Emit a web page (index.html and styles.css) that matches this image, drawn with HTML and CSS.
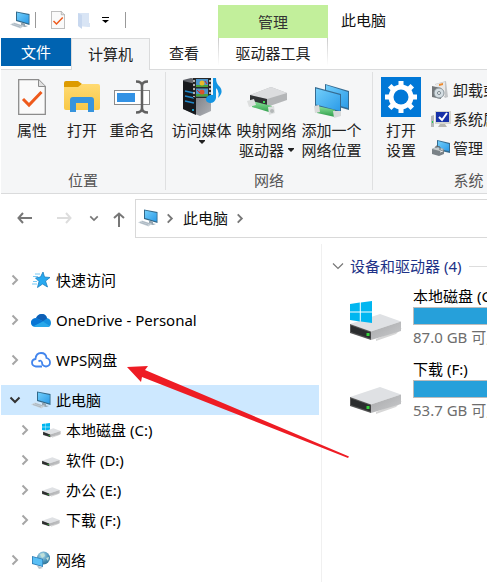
FILE: index.html
```html
<!DOCTYPE html>
<html lang="zh-CN">
<head>
<meta charset="utf-8">
<meta name="viewport" content="width=device-width, initial-scale=1">
<title>此电脑</title>
<link rel="stylesheet" href="styles.css">
</head>
<body>
<svg class="sprite" aria-hidden="true">
  <defs>
    <linearGradient id="screen" x1="0" y1="0" x2="1" y2="1"><stop offset="0" stop-color="#72cefa"/><stop offset="1" stop-color="#2b9be8"/></linearGradient>
    <linearGradient id="folder" x1="0" y1="0" x2="0" y2="1"><stop offset="0" stop-color="#ffda72"/><stop offset="1" stop-color="#f8c847"/></linearGradient>
    <linearGradient id="side" x1="0" y1="0" x2="1" y2="1"><stop offset="0" stop-color="#a8a9ab"/><stop offset="1" stop-color="#c9cacc"/></linearGradient>
    <linearGradient id="tube" x1="0" y1="0" x2="0" y2="1"><stop offset="0" stop-color="#8be29b"/><stop offset="1" stop-color="#2c9c48"/></linearGradient>
    <linearGradient id="tower" x1="0" y1="0" x2="1" y2="1"><stop offset="0" stop-color="#55585f"/><stop offset="1" stop-color="#aeb1b6"/></linearGradient>
    <radialGradient id="globe" cx=".4" cy=".3" r=".8"><stop offset="0" stop-color="#b5e0ee"/><stop offset=".6" stop-color="#4b93b8"/><stop offset="1" stop-color="#286888"/></radialGradient>
  </defs>
  <symbol id="pc" viewBox="0 0 20 18">
    <path d="M6 0.500 19.500 3V14L6 10z" fill="#326889"/>
    <path d="M7 1.500 18.700 4V12.500L7 9z" fill="url(#screen)"/>
    <path d="M11 11.500l4 1v2l3 .6-3 1-5-1.300 1-.5z" fill="#93a4b0"/>
    <path d="M0 13.500 4 11.500 14 14.800 10.500 17.500z" fill="#c9d2d9"/>
    <path d="M2 13.500l8 2.500M4 12.500l8 2.500" stroke="#9dacb7" stroke-width=".7"/>
  </symbol>
  <symbol id="doc" viewBox="0 0 28 36">
    <path d="M.7.7H20.500L27.300 7.500V35.300H.7z" fill="#fafafa" stroke="#8c8c8c" stroke-width="1.300"/>
    <path d="M20.500.7V7.500H27.300" fill="#e2e2e2" stroke="#8c8c8c"/>
    <path d="M5 20l6 6L23.500 13" fill="none" stroke="#ee5a1c" stroke-width="3"/>
  </symbol>
  <symbol id="drive" viewBox="0 0 52 27">
    <path d="M26 25 52 14 46 20 26 27z" fill="#d7d7d7"/>
    <path d="M0 10 30 0 51 7.500 21 17.500z" fill="#dfe1e4"/>
    <path d="M21 17.500 51 7.500V17L21 26z" fill="url(#side)"/>
    <path d="M0 10 21 17.500V26L0 19z" fill="#555"/>
    <path d="M1 11.500 20.500 18.500V24.500L1 18z" fill="#2b2d2e"/>
    <rect x="16.500" y="19" width="3" height="3" fill="#35d23b"/>
  </symbol>
  <symbol id="winlogo" viewBox="0 0 22 22">
    <path d="M0 3 9.800 1.500V10.500H0zM10.800 1.400 22 0V10.500H10.800zM0 11.500H9.800V20.500L0 19zM10.800 11.500H22V22L10.800 20.600z" fill="#00b6f0"/>
  </symbol>
  <symbol id="chev-r" viewBox="0 0 8 12"><path d="M1.500 1.500 6 6 1.500 10.500" fill="none" stroke="currentColor" stroke-width="2"/></symbol>
  <symbol id="chev-d" viewBox="0 0 12 8"><path d="M1.500 1.500 6 6 10.500 1.500" fill="none" stroke="currentColor" stroke-width="2"/></symbol>
  <symbol id="caret" viewBox="0 0 6 4"><path d="M0 0H6V1L3 4 0 1z" fill="#222"/></symbol>
</svg>

<div class="window">
  <header class="titlebar">
    <div class="quick">
      <svg class="i-pc"><use href="#pc"/></svg>
      <span class="rule"></span>
      <button class="q-doc" aria-label="属性"><svg width="14" height="18"><use href="#doc"/></svg></button>
      <button class="q-folder" aria-label="新建文件夹"><svg width="13" height="17" viewBox="0 0 13 17"><path d="M1 1H12V11H13V15H11L1 14z" fill="#d9e5f5"/><path d="M1 1 5 3V17L1 14z" fill="#c8d8ef"/></svg></button>
      <button class="q-more" aria-label="自定义快速访问工具栏"><svg width="7" height="6" viewBox="0 0 7 6"><path d="M0 0H7V1H0zM0 3H7L3.500 6z"/></svg></button>
      <span class="rule"></span>
    </div>
    <div class="context">管理</div>
    <h1 class="title">此电脑</h1>
  </header>

  <nav class="tabs">
    <button class="tab tab-file">文件</button>
    <button class="tab tab-active">计算机</button>
    <button class="tab tab-view">查看</button>
    <button class="tab tab-tools">驱动器工具</button>
  </nav>

  <section class="ribbon">
    <div class="group group-place">
      <div class="tools">
        <button class="tool"><span class="pic"><svg width="28" height="36"><use href="#doc"/></svg></span>属性</button>
        <button class="tool"><span class="pic"><svg width="36" height="32" viewBox="0 0 36 32">
          <path d="M0 2Q0 0 2 0H14L18 3 15 7H0z" fill="#dd9b00"/>
          <path d="M0 6H14L18 3H34Q36 3 36 5V27Q36 29 34 29H2Q0 29 0 27z" fill="url(#folder)"/>
          <path d="M6 31V19Q6 16 9 16H27Q30 16 30 19V31H24V22H12V31z" fill="#3694dd"/></svg></span>打开</button>
        <button class="tool"><span class="pic"><svg width="36" height="34" viewBox="0 0 36 34">
          <rect x=".5" y="10.500" width="35" height="14" fill="#fff" stroke="#8b8b8b"/>
          <rect x="3" y="13" width="18" height="9" fill="#3392e4"/>
          <path d="M22 1.500Q28 1.500 28 6V28Q28 32.500 22 32.500M34 1.500Q28 1.500 28 6M28 28Q28 32.500 34 32.500" fill="none" stroke="#606060" stroke-width="2.500"/></svg></span>重命名</button>
      </div>
      <h2>位置</h2>
    </div>
    <div class="group group-net">
      <div class="tools">
        <button class="tool"><span class="pic"><svg width="40" height="38" viewBox="0 0 40 38">
          <path d="M1 2 9 0 29 4V33L18 38 1 31z" fill="url(#tower)"/>
          <path d="M1 3 14 6V37L1 31z" fill="#17191d"/>
          <path d="M3 13l9 2M3 18l9 2M3 23l9 2" stroke="#2188c8" stroke-width="1.500"/><circle cx="11" cy="32" r="1" fill="#20c8ff"/>
          <path d="M11 0H29V20H11z" fill="#282828"/><path d="M12 2v17M28 2v17" stroke="#ddd" stroke-width="1.500" stroke-dasharray="2 2"/>
          <path d="M14 1H26V9H14zM14 10.500H26V18.500H14z" fill="#4a94cc"/>
          <path d="M14 7H26V9H14zM14 16H26V18.500H14z" fill="#4da13c"/><circle cx="20" cy="5" r="2.500" fill="#e8b92b"/><circle cx="20" cy="14" r="2.500" fill="#d9542c"/><path d="M23 3l2 3M15 12l3 3" stroke="#d22"/>
          <path d="M31 0H34Q34 6 38 9Q42 14 36 20Q38 13 34 10V20Q33 25 28 25Q23 24 24 20Q27 16 31 17z" fill="#1495e3"/></svg></span>访问媒体<svg class="caret"><use href="#caret"/></svg></button>
        <button class="tool"><span class="pic low"><svg width="40" height="28" viewBox="0 0 40 28">
          <path d="M3 8 24 0 40 6V13L20 20 3 14z" fill="#b4b6b8"/><path d="M3 8 24 0 40 6 20 12z" fill="#dcdddf"/>
          <path d="M3 8 20 12V19L3 14z" fill="#303234"/><path d="M16 14h2v2h-2z" fill="#40db58"/>
          <path d="M5 14 25 19V26L5 20z" fill="url(#tube)"/><path d="M0 14 7 12 9 18 2 20zM21 20 27 19 28 26 22 28z" fill="#dddfdf"/><circle cx="25" cy="24" r="2" fill="#b3b7b8"/></svg></span>映射网络<span>驱动器<svg class="caret side"><use href="#caret"/></svg></span></button>
        <button class="tool"><span class="pic low"><svg width="36" height="34" viewBox="0 0 36 34">
          <path d="M11 0 35 7V26L11 19z" fill="#366b91"/><path d="M12 1 34 8V24L12 18z" fill="url(#screen)"/>
          <path d="M1 3 27 10V29L1 22z" fill="#366b91"/><path d="M2 4.500 26 11V27L2 20.500z" fill="url(#screen)"/>
          <path d="M3 22 21 26V33L3 29z" fill="url(#tube)"/><path d="M0 22 5 21 6 28 1 29zM19 27 27 27V32L20 34z" fill="#d8dada"/></svg></span>添加一个<span>网络位置</span></button>
      </div>
      <h2>网络</h2>
    </div>
    <div class="group group-sys">
      <div class="tools">
        <button class="tool"><span class="pic"><svg width="40" height="40" viewBox="0 0 40 40">
          <rect width="40" height="40" fill="#0078d7"/>
          <g transform="translate(20 20)" fill="#fff"><rect id="cog" x="-2.500" y="-16" width="5" height="32"/><use href="#cog" transform="rotate(45)"/><use href="#cog" transform="rotate(90)"/><use href="#cog" transform="rotate(135)"/><circle r="12.500"/><circle r="7.500" fill="#0078d7"/></g></svg></span>打开<span>设置</span></button>
        <div class="stack">
          <button class="mini"><svg width="20" height="20" viewBox="0 0 20 20"><path d="M4 4 15 1 17 17 14 18z" fill="#c3c5c7"/><path d="M5 4 14 2V16H5z" fill="#e8e8e8"/><path d="M8 4l4-1v2l-4 1z" fill="#ed8b2f"/><path d="M1 6 10 8V19L1 17z" fill="#73777a"/><circle cx="8" cy="13" r="5" fill="#d5dee3" stroke="#8a949a"/><circle cx="8" cy="13" r="1.500" fill="#fff" stroke="#78848b"/></svg>卸载或更改程序</button>
          <button class="mini"><svg width="20" height="18" viewBox="0 0 20 18"><path d="M0 6 3 5V17H0z" fill="#b5b8b9"/><path d="M1 11h1v2H1z" fill="#2c5"/><path d="M4 1H20V14H4z" fill="#d5d5cf"/><path d="M5 2H18V12H5z" fill="#1731a8"/><path d="M8 7l3 3 5-7" fill="none" stroke="#fff" stroke-width="2"/><path d="M9 14h5l2 3H7z" fill="#b8b8b2"/></svg>系统属性</button>
          <button class="mini"><svg width="20" height="18" viewBox="0 0 20 18"><path d="M6 1 19 4V14L6 11z" fill="#346b90"/><path d="M7 2 18 5V12L7 10z" fill="url(#screen)"/><path d="M1 10 5 8 13 10V15L8 17 1 15z" fill="#7a8287"/><path d="M1 10 5 8 13 10 9 12z" fill="#c5cbcd"/><path d="M5 9V7l4 1v3" fill="none" stroke="#666"/><path d="M9 13l3-1" stroke="#eee"/></svg>管理</button>
        </div>
      </div>
      <h2>系统</h2>
    </div>
  </section>

  <div class="navbar">
    <button class="nav-back" aria-label="后退"><svg width="16" height="12" viewBox="0 0 16 12"><path d="M6 1 1.500 6 6 11M1.500 6H15" fill="none" stroke="#777" stroke-width="2"/></svg></button>
    <button class="nav-fwd" aria-label="前进" disabled><svg width="16" height="12" viewBox="0 0 16 12"><path d="M10 1 14.500 6 10 11M14.500 6H1" fill="none" stroke="#ddd" stroke-width="2"/></svg></button>
    <button class="nav-recent" aria-label="最近位置"><svg width="10" height="7"><use href="#chev-d"/></svg></button>
    <button class="nav-up" aria-label="上移"><svg width="12" height="16" viewBox="0 0 12 16"><path d="M1 6 6 1.500 11 6M6 1.500V15" fill="none" stroke="#777" stroke-width="2"/></svg></button>
    <div class="address">
      <svg class="i-pc"><use href="#pc"/></svg>
      <svg class="sep"><use href="#chev-r"/></svg>
      <a href="#">此电脑</a>
      <svg class="sep"><use href="#chev-r"/></svg>
    </div>
  </div>

  <div class="body">
    <nav class="tree">
      <a class="node" href="#"><svg class="chev"><use href="#chev-r"/></svg><span class="ico"><svg width="18" height="16" viewBox="0 0 18 16"><path d="M11 0 12.500 5 18 5.500 13.500 9 15.500 15 10.500 12 5.500 15.500 7 9.500 3.500 6 8.500 5z" fill="#27a9f0" stroke="#1a7dbf" stroke-width=".8"/><path d="M3 2h5M1 4.500h5M1 9.500h4M0 12h5" stroke="#57bdf3" stroke-width=".8"/></svg></span>快速访问</a>
      <a class="node" href="#"><svg class="chev"><use href="#chev-r"/></svg><span class="ico"><svg width="20" height="13" viewBox="0 0 20 13"><path d="M5 5Q6 0 11 0Q15 0 16 4Q20 5 20 9Q20 13 16 13H5Q0 13 0 8.500Q0 5 5 5" fill="#1490df"/><path d="M5 4Q7 0 11 0Q15 0 16 4.500L12 7z" fill="#0f5fb5"/><path d="M5 4 12 7.500 3 12Q0 11 0 8Q1 4 5 4" fill="#0875d4"/><path d="M3 12 12 7.500 19 12Q18 13 16 13H5z" fill="#28a8ea"/></svg></span>OneDrive - Personal</a>
      <a class="node" href="#"><svg class="chev"><use href="#chev-r"/></svg><span class="ico"><svg width="20" height="16" viewBox="0 0 20 16"><path d="M11 14.500H5Q1 14 1 10.500Q1 7.500 4.500 7Q5 1 10 1Q15 1 15.500 6Q19 7 19 10.500Q19 14 15 14.500Q11 14 11 10.500Q10 7.500 7.500 9.500" fill="none" stroke="#4285ed" stroke-width="1.800"/></svg></span>WPS网盘</a>
      <a class="node selected" href="#" aria-current="page"><svg class="chev"><use href="#chev-d"/></svg><span class="ico"><svg class="i-pc"><use href="#pc"/></svg></span>此电脑</a>
      <a class="node child" href="#"><svg class="chev"><use href="#chev-r"/></svg><span class="ico"><svg width="19" height="15" viewBox="0 0 19 15"><use href="#winlogo" width="8" height="8"/><use href="#drive" x="1" y="5" width="18" height="10"/></svg></span>本地磁盘 (C:)</a>
      <a class="node child" href="#"><svg class="chev"><use href="#chev-r"/></svg><span class="ico low"><svg width="18" height="10"><use href="#drive"/></svg></span>软件 (D:)</a>
      <a class="node child" href="#"><svg class="chev"><use href="#chev-r"/></svg><span class="ico low"><svg width="18" height="10"><use href="#drive"/></svg></span>办公 (E:)</a>
      <a class="node child" href="#"><svg class="chev"><use href="#chev-r"/></svg><span class="ico low"><svg width="18" height="10"><use href="#drive"/></svg></span>下载 (F:)</a>
      <a class="node" href="#"><svg class="chev"><use href="#chev-r"/></svg><span class="ico"><svg width="18" height="18" viewBox="0 0 18 18"><circle cx="11.500" cy="7" r="6.500" fill="url(#globe)"/><path d="M8 3l4-1 1 3-3 2zM14 7l3-1-1 4z" fill="#bfe0d8"/><path d="M0 5 11 8V16L0 13z" fill="#2d7cb5"/><path d="M.8 6 10.300 8.600V15L.8 12.300z" fill="#59bff5"/><path d="M5 15h2l4 2-4 1z" fill="#b8c4cb"/></svg></span>网络</a>
    </nav>
    <main class="content">
      <h2 class="section"><svg width="12" height="8" viewBox="0 0 12 8"><path d="M1 1.500 6 6.500 11 1.500" fill="none" stroke="#777" stroke-width="1.200"/></svg>设备和驱动器 (4)</h2>
      <div class="disk">
        <svg class="disk-pic" viewBox="0 0 54 40"><use href="#drive" y="13" width="52" height="27"/><use href="#winlogo" width="22" height="22"/></svg>
        <div class="disk-info"><span>本地磁盘 (C:)</span><div class="bar"></div><span class="free">87.0 GB 可用</span></div>
      </div>
      <div class="disk">
        <svg class="disk-pic" viewBox="0 0 54 40"><use href="#drive" y="13" width="52" height="27"/></svg>
        <div class="disk-info"><span>下载 (F:)</span><div class="bar"></div><span class="free">53.7 GB 可用</span></div>
      </div>
    </main>
    <svg class="pointer" viewBox="0 0 222 92" aria-hidden="true"><path d="M0 1 21 0 18 4 222 90.500 221 92 15 11 14 16z" fill="#ee1c24"/></svg>
  </div>
</div>
</body>
</html>
```
FILE: styles.css
```css
* { box-sizing: border-box; }

body {
  margin: 0;
  overflow: hidden;
  background: #fff;
  color: #111;
  font: 15px/20px "Noto Sans", "Noto Sans CJK SC", sans-serif;
}

h1, h2 { margin: 0; font-size: 15px; font-weight: 400; }
a { color: inherit; text-decoration: none; }
svg { flex: none; display: block; }
button {
  display: flex;
  align-items: center;
  justify-content: center;
  padding: 0;
  border: 0;
  background: none;
  color: #222;
  font: inherit;
  white-space: nowrap;
}

.sprite { position: absolute; width: 0; height: 0; }
.window { display: flex; flex-direction: column; min-height: 100vh; padding-left: 1px; }
.i-pc { width: 20px; height: 18px; }

/* Title bar */
.titlebar { display: flex; height: 38px; }
.quick { display: flex; flex: 0 0 217px; align-items: center; padding: 2px 0 0 9px; }
.rule { width: 1px; height: 16px; background: #999; }
.quick .i-pc { margin-right: 5px; }
.q-doc { margin-left: 15px; }
.q-folder { margin-left: 12px; }
.q-more { margin: 0 16px 0 12px; }
.context {
  display: flex;
  flex: 0 0 110px;
  align-items: center;
  justify-content: center;
  margin-top: 5px;
  background: #c2ef9b;
  color: #333;
}
.title { padding: 10px 0 0 13px; }

/* Ribbon tabs */
.tabs { display: flex; height: 32px; border-bottom: 1px solid #dadbdc; }
.tab { height: 30px; }
.tab-file { width: 70px; height: 28px; background: #0063b1; color: #fff; }
.tab-active {
  width: 79px;
  height: 32px;
  padding-bottom: 2px;
  border: 1px solid #dadbdc;
  border-bottom: 0;
  background: #f5f6f7;
}
.tab-view { width: 68px; }
.tab-tools {
  width: 110px;
  border: solid;
  border-width: 0 1px;
  border-image: linear-gradient(#c8c8c8, #fff 90%) 1;
}

/* Ribbon */
.ribbon {
  display: flex;
  height: 124px;
  overflow: hidden;
  border-bottom: 1px solid #dadbdc;
  background: #f5f6f7;
}
.group {
  display: flex;
  flex: none;
  flex-direction: column;
  margin: 2px 0 3px;
  border-right: 1px solid #dfe0e1;
}
.group h2 { margin-top: auto; color: #555; text-align: center; }
.group-place { width: 165px; }
.group-net { width: 207px; }
.group-sys { width: 192px; }
.tools { display: flex; height: 92px; padding: 0 6px; }
.group-net .tools, .group-sys .tools { padding: 0 3px; }
.tool { flex: 0 0 50px; flex-direction: column; justify-content: flex-start; padding-top: 4px; }
.group-net .tool { flex-basis: 65px; }
.pic { display: flex; flex: none; align-items: center; justify-content: center; height: 42px; margin-bottom: 2px; }
.pic.low { padding-top: 8px; }
.caret { width: 6px; height: 4px; }
.caret.side { display: inline-block; margin-left: 4px; vertical-align: 4px; }
.stack { display: flex; flex-direction: column; gap: 9px; padding: 8px 0 0 5px; }
.mini { justify-content: flex-start; gap: 2px; height: 20px; }

/* Address row */
.navbar { display: flex; align-items: center; height: 50px; padding: 5px 0 7px 16px; }
.nav-fwd { margin-left: 23px; }
.nav-recent { margin-left: 17px; color: #777; }
.nav-up { margin: 3px 10px 0 14px; }
.address {
  display: flex;
  flex: 1;
  align-items: center;
  height: 39px;
  padding-left: 2px;
  border: 1px solid #d9d9d9;
  border-right: 0;
}
.sep { width: 8px; height: 11px; margin: 0 9px 0 8px; color: #777; }

/* Body */
.body { position: relative; display: flex; flex: 1; }
.tree { flex: 0 0 318px; padding-top: 11px; }
.node { display: flex; align-items: center; height: 30px; margin-top: 10px; padding-left: 8px; color: #000; white-space: nowrap; }
.node.child { margin-top: 0; padding-left: 18px; }
.node.selected { background: #cde8ff; }
.chev { width: 12px; height: 12px; color: #a6a6a6; }
.selected .chev { height: 8px; color: #333; }
.ico { display: flex; flex: none; justify-content: center; width: 20px; margin: 0 5px 0 10px; }
.ico.low { padding-top: 4px; }

.content { flex: 1; min-width: 0; overflow: hidden; margin-left: 2px; padding: 12px 0 0 10px; border-left: 1px solid #f0f0f0; }
.section { display: flex; align-items: center; gap: 6px; color: #1e3287; white-space: nowrap; }
.section::after { flex: 1; height: 1px; margin-left: 2px; background: #ddd; content: ""; }
.disk { display: flex; gap: 9px; width: 260px; margin-top: 10px; padding-left: 18px; height: 63px; }
.disk-pic { width: 54px; height: 40px; margin-top: 15px; }
.disk-info { flex: 1; color: #000; }
.disk-info span { display: block; }
.bar { height: 18px; margin: 1px 0 2px; border: 1px solid #bcbcbc; background: #26a0da; }
.disk-info .free { color: #6d6d6d; }

.pointer { position: absolute; top: 122px; left: 126px; width: 222px; height: 92px; }
```
